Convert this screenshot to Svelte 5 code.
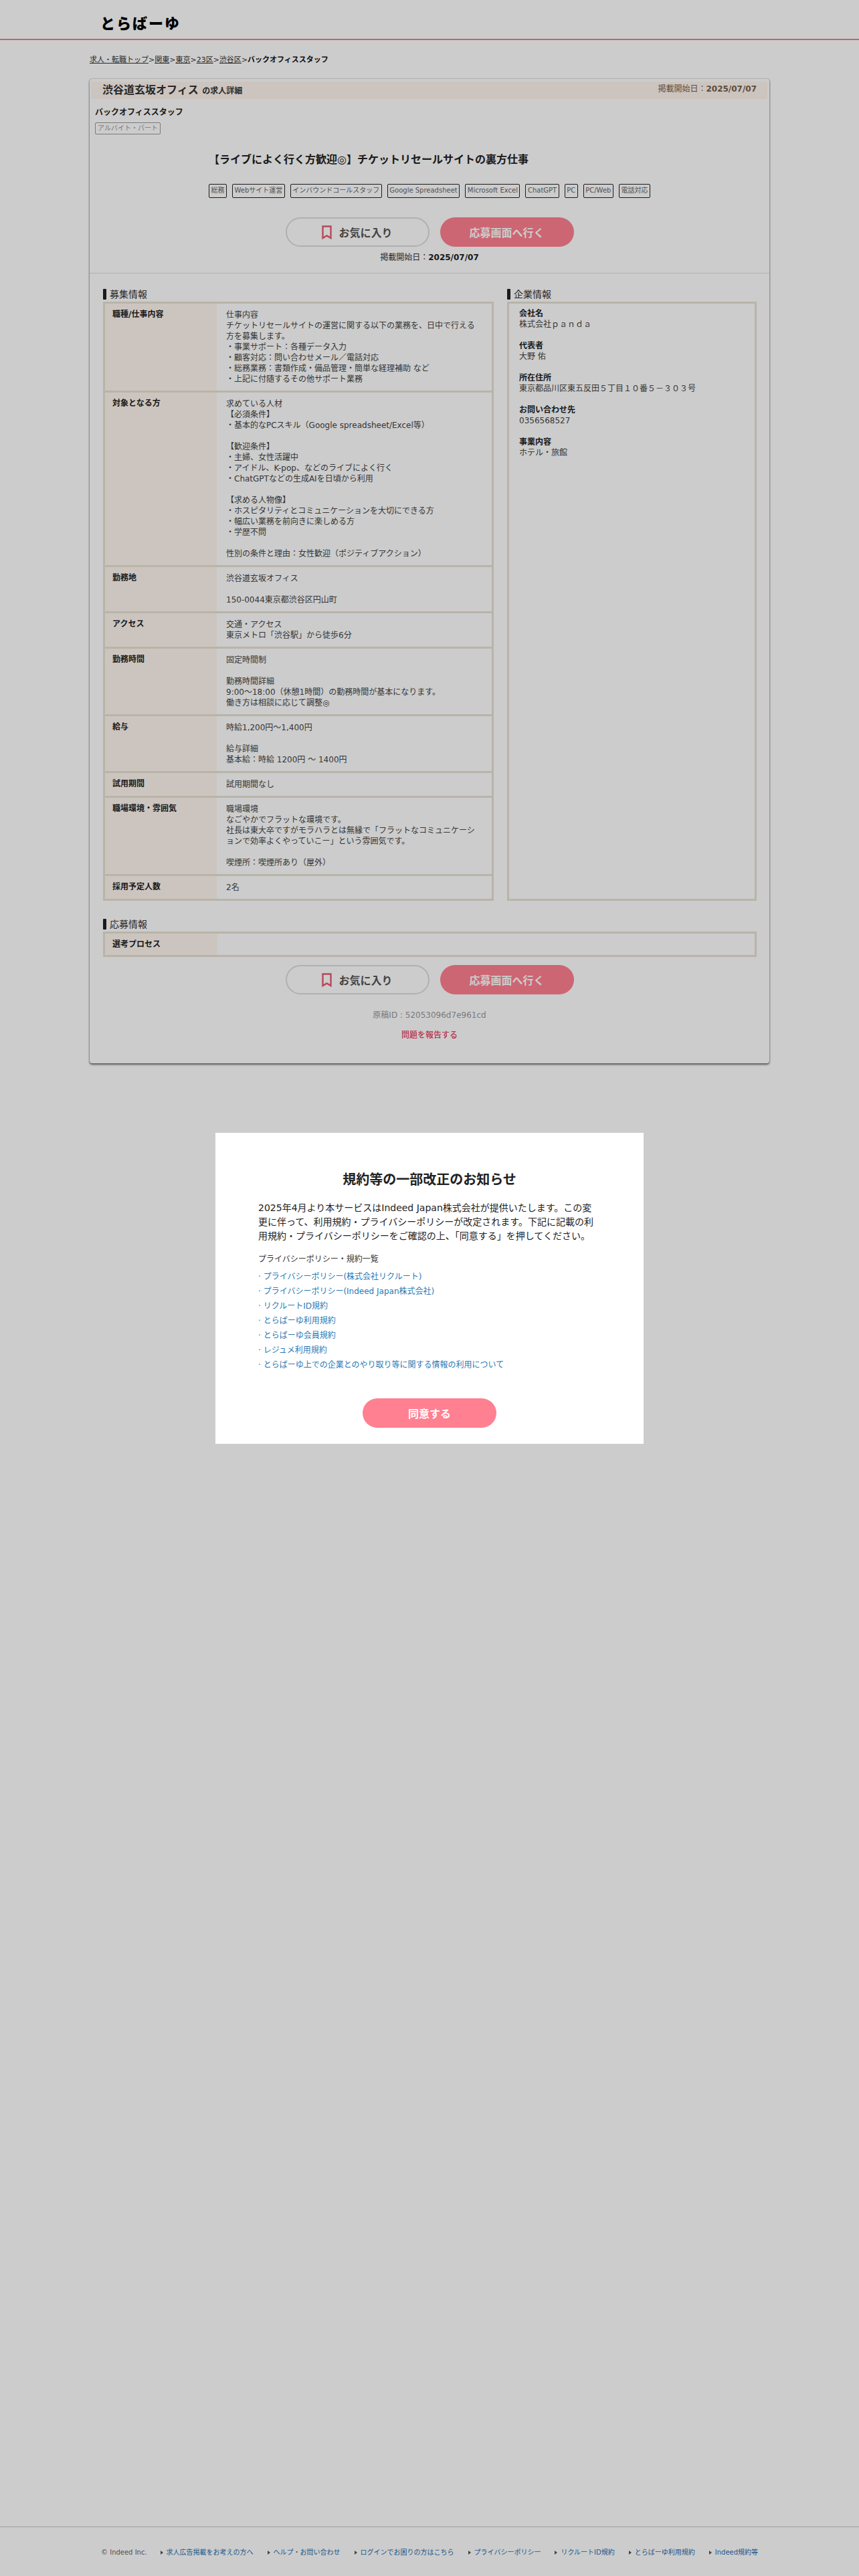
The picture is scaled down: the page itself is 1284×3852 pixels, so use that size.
<script>
  const crumbs = ['求人・転職トップ', '関東', '東京', '23区', '渋谷区'];
  const tags = ['総務', 'Webサイト運営', 'インバウンドコールスタッフ', 'Google Spreadsheet', 'Microsoft Excel', 'ChatGPT', 'PC', 'PC/Web', '電話対応'];
  const rows = [
    ['職種/仕事内容', `仕事内容
チケットリセールサイトの運営に関する以下の業務を、日中で行える方を募集します。
・事業サポート：各種データ入力
・顧客対応：問い合わせメール／電話対応
・総務業務：書類作成・備品管理・簡単な経理補助 など
・上記に付随するその他サポート業務`],
    ['対象となる方', `求めている人材
【必須条件】
・基本的なPCスキル（Google spreadsheet/Excel等）

【歓迎条件】
・主婦、女性活躍中
・アイドル、K-pop、などのライブによく行く
・ChatGPTなどの生成AIを日頃から利用

【求める人物像】
・ホスピタリティとコミュニケーションを大切にできる方
・幅広い業務を前向きに楽しめる方
・学歴不問

性別の条件と理由：女性歓迎（ポジティブアクション）`],
    ['勤務地', `渋谷道玄坂オフィス

150-0044東京都渋谷区円山町`],
    ['アクセス', `交通・アクセス
東京メトロ「渋谷駅」から徒歩6分`],
    ['勤務時間', `固定時間制

勤務時間詳細
9:00〜18:00（休憩1時間）の勤務時間が基本になります。
働き方は相談に応じて調整◎`],
    ['給与', `時給1,200円〜1,400円

給与詳細
基本給：時給 1200円 〜 1400円`],
    ['試用期間', '試用期間なし'],
    ['職場環境・雰囲気', `職場環境
なごやかでフラットな環境です。
社長は東大卒ですがモラハラとは無縁で「フラットなコミュニケーションで効率よくやっていこー」という雰囲気です。

喫煙所：喫煙所あり（屋外）`],
    ['採用予定人数', '2名'],
  ];
  const company = [
    ['会社名', '株式会社ｐａｎｄａ'],
    ['代表者', '大野 佑'],
    ['所在住所', '東京都品川区東五反田５丁目１０番５－３０３号'],
    ['お問い合わせ先', '0356568527'],
    ['事業内容', 'ホテル・旅館'],
  ];
  const policies = [
    'プライバシーポリシー(株式会社リクルート)',
    'プライバシーポリシー(Indeed Japan株式会社)',
    'リクルートID規約',
    'とらばーゆ利用規約',
    'とらばーゆ会員規約',
    'レジュメ利用規約',
    'とらばーゆ上での企業とのやり取り等に関する情報の利用について',
  ];
  const foot = ['求人広告掲載をお考えの方へ', 'ヘルプ・お問い合わせ', 'ログインでお困りの方はこちら', 'プライバシーポリシー', 'リクルートID規約', 'とらばーゆ利用規約', 'Indeed規約等'];
</script>

{#snippet actions()}
  <div class="actions">
    <button class="fav">
      <svg width="15" height="21" viewBox="0 0 15 21" aria-hidden="true"><path d="M1.5 1.5h12v17.5l-6-3.6-6 3.6z" fill="none" stroke="#e85a70" stroke-width="2.4"/></svg>
      お気に入り
    </button>
    <button class="apply">応募画面へ行く</button>
  </div>
{/snippet}

<div class="page">
  <header class="top"><span class="logo">とらばーゆ</span></header>

  <main class="main">
    <nav class="crumbs">
      {#each crumbs as c}<a href="#top">{c}</a><span>&gt;</span>{/each}<b>バックオフィススタッフ</b>
    </nav>

    <article class="card">
      <div class="band">
        <h1>渋谷道玄坂オフィス <small>の求人詳細</small></h1>
        <p>掲載開始日：<b>2025/07/07</b></p>
      </div>

      <div class="intro">
        <h2>バックオフィススタッフ</h2>
        <span class="emp">アルバイト・パート</span>
      </div>

      <div class="lead">
        <h3>【ライブによく行く方歓迎◎】チケットリセールサイトの裏方仕事</h3>
        <ul class="tags">
          {#each tags as t}<li>{t}</li>{/each}
        </ul>
      </div>

      {@render actions()}
      <p class="posted">掲載開始日：<b>2025/07/07</b></p>
      <hr />

      <div class="cols">
        <section class="left">
          <h4>募集情報</h4>
          <div class="table">
            {#each rows as r}
              <div class="row">
                <div class="th">{r[0]}</div>
                <div class="td">{r[1]}</div>
              </div>
            {/each}
          </div>
        </section>
        <section class="right">
          <h4>企業情報</h4>
          <div class="cobox">
            {#each company as c}
              <dl><dt>{c[0]}</dt><dd>{c[1]}</dd></dl>
            {/each}
          </div>
        </section>
      </div>

      <section class="apply-sec">
        <h4>応募情報</h4>
        <div class="table">
          <div class="row"><div class="th">選考プロセス</div><div class="td"></div></div>
        </div>
      </section>

      {@render actions()}
      <p class="rid">原稿ID : 52053096d7e961cd</p>
      <a class="report" href="#top">問題を報告する</a>
    </article>
  </main>

  <footer class="foot">
    <span class="copy">© Indeed Inc.</span>
    {#each foot as f}<a href="#top">{f}</a>{/each}
  </footer>

  <div class="overlay">
    <div class="modal">
      <h5>規約等の一部改正のお知らせ</h5>
      <p class="msg">2025年4月より本サービスはIndeed Japan株式会社が提供いたします。この変更に伴って、利用規約・プライバシーポリシーが改定されます。下記に記載の利用規約・プライバシーポリシーをご確認の上、「同意する」を押してください。</p>
      <p class="lst">プライバシーポリシー・規約一覧</p>
      <ul class="pol">
        {#each policies as p}<li><a href="#top">{p}</a></li>{/each}
      </ul>
      <button class="agree">同意する</button>
    </div>
  </div>
</div>

<style>
  :global(body) { margin: 0; background: #fff; }
  .page {
    position: relative;
    min-height: 3852px;
    display: flex;
    flex-direction: column;
    font-family: "DejaVu Sans", "Noto Sans CJK JP", sans-serif;
    font-size: 12px;
    line-height: 16px;
    color: #333;
  }
  h1, h2, h3, h4, h5, p, ul, dl, dd { margin: 0; padding: 0; }
  ul { list-style: none; }
  a { color: inherit; }
  button { font-family: inherit; border: 0; padding: 0; cursor: pointer; }

  .top {
    height: 58px;
    border-bottom: 2px solid #ee7f8e;
    padding-left: 150px;
    display: flex;
    align-items: center;
    box-sizing: content-box;
  }
  .logo {
    font-family: "Noto Sans CJK JP", sans-serif;
    font-weight: 900;
    font-size: 22px;
    line-height: 24px;
    letter-spacing: 2px;
    color: #000;
    margin-top: 8px;
  }

  .main { flex: 1; padding: 0 134px; }
  .crumbs {
    margin-top: 22px;
    font-size: 11px;
    line-height: 16px;
    color: #333;
    white-space: nowrap;
  }
  .crumbs b { color: #111; }
  .crumbs span { color: #333; }

  .card {
    margin-top: 20px;
    padding: 4px 0 34px;
    background: #fff;
    border-radius: 4px;
    box-shadow: 0 2px 3px rgba(0, 0, 0, .55), 0 0 2px rgba(0, 0, 0, .4);
    text-align: left;
  }
  .band {
    height: 26px;
    margin: 0 3px 0 2px;
    padding: 0 16px 0 17px;
    background: #fff6ee;
    display: flex;
    align-items: center;
    justify-content: space-between;
  }
  .band h1 { font-size: 16px; line-height: 22px; font-weight: 700; color: #333; }
  .band small { font-size: 12px; }
  .band p { color: #75604d; margin-top: -5px; }

  .intro { padding: 12px 8px 0; }
  .intro h2 { font-size: 12px; line-height: 16px; font-weight: 700; color: #222; }
  .emp {
    display: inline-block;
    margin-top: 7px;
    height: 18px;
    box-sizing: border-box;
    padding: 0 3px;
    border: 1px solid #999;
    border-radius: 2px;
    font-size: 10px;
    line-height: 15px;
    color: #999;
  }

  .lead { padding-left: 178px; margin-top: 26px; }
  .lead h3 { font-size: 16px; line-height: 24px; font-weight: 700; color: #222; }
  .tags { display: flex; gap: 8px; margin-top: 24px; }
  .tags li {
    height: 21px;
    box-sizing: border-box;
    padding: 0 2.5px;
    border: 1px solid #222;
    border-radius: 2px;
    font-size: 10px;
    line-height: 18px;
    color: #666;
    white-space: nowrap;
  }

  .actions { display: flex; justify-content: center; gap: 16px; margin-top: 29px; }
  .fav, .apply {
    height: 44px;
    border-radius: 22px;
    font-size: 16px;
    font-weight: 700;
    display: flex;
    align-items: center;
    justify-content: center;
  }
  .fav {
    width: 215px;
    gap: 10px;
    background: #fff;
    border: 2px solid #ddd;
    box-sizing: border-box;
    color: #555;
  }
  .apply { width: 200px; background: #ff8090; color: #fff; }

  .posted { margin-top: 8px; text-align: center; color: #333; }
  .posted b { color: #222; }
  hr { margin: 15px 0 0; border: 0; border-top: 1px solid #ddd; }

  h4 {
    position: relative;
    font-size: 14px;
    line-height: 20px;
    font-weight: 400;
    padding-left: 10px;
    color: #333;
  }
  h4::before {
    content: "";
    position: absolute;
    left: 0;
    top: 2px;
    width: 5px;
    height: 16px;
    border-radius: 1px;
    background: #222;
  }

  .cols { display: flex; gap: 20px; margin-top: 21px; padding: 0 19px 0 20px; }
  .left { width: 584px; flex: none; }
  .right { flex: 1; display: flex; flex-direction: column; }

  .table { border: 3px solid #e6e2d2; margin-top: 1px; }
  .row { display: flex; border-bottom: 3px solid #e6e2d2; }
  .row:last-child { border-bottom: 0; }
  .th {
    width: 167px;
    flex: none;
    box-sizing: border-box;
    padding: 9px 11px;
    background: #fff7ef;
    font-weight: 700;
    color: #222;
    line-height: 15px;
  }
  .td {
    flex: 1;
    min-height: 16px;
    padding: 9px 14px;
    white-space: pre-line;
    color: #444;
  }

  .cobox {
    flex: 1;
    border: 3px solid #e6e2d2;
    margin-top: 1px;
    padding: 7px 15px;
  }
  .cobox dl { margin-bottom: 16px; }
  .cobox dt { font-weight: 700; color: #222; }
  .cobox dd { color: #444; }

  .apply-sec { margin-top: 25px; padding: 0 19px 0 20px; }
  .apply-sec .th { width: 168px; padding: 8px 11px; line-height: 16px; }
  .apply-sec .td { padding: 8px 14px; }
  .apply-sec + .actions { margin-top: 12px; }

  .rid { margin-top: 23px; text-align: center; color: #999; }
  .report {
    display: block;
    margin-top: 14px;
    text-align: center;
    text-decoration: none;
    font-weight: 500;
    color: #e8405c;
  }

  .foot {
    height: 71px;
    border-top: 1px solid #c8c8c8;
    padding-left: 151px;
    display: flex;
    align-items: center;
    font-size: 10px;
    white-space: nowrap;
    padding-top: 2px;
    box-sizing: content-box;
  }
  .copy { color: #666; margin-right: 20px; }
  .foot a {
    position: relative;
    padding-left: 9px;
    margin-right: 21px;
    color: #2a6fb0;
    text-decoration: none;
  }
  .foot a::before {
    content: "";
    position: absolute;
    left: 0;
    top: 5px;
    border-left: 4px solid #555;
    border-top: 3px solid transparent;
    border-bottom: 3px solid transparent;
  }

  .overlay {
    position: absolute;
    inset: 0;
    background: rgba(0, 0, 0, .2);
    display: flex;
    justify-content: center;
    align-items: flex-start;
    padding-top: 1694px;
    box-sizing: border-box;
  }
  .modal {
    width: 640px;
    height: 465px;
    box-sizing: border-box;
    padding: 57px 64px 0;
    background: #fff;
    color: #222;
  }
  h5 {
    font-size: 20px;
    line-height: 26px;
    font-weight: 700;
    text-align: center;
    color: #222;
  }
  .msg { margin-top: 19px; font-size: 14px; line-height: 21px; }
  .lst { margin-top: 16px; color: #333; }
  .pol { margin-top: 7px; }
  .pol li { line-height: 22px; height: 22px; color: #2a7ab5; white-space: nowrap; }
  .pol li::before { content: "· "; }
  .pol a { text-decoration: none; }
  .agree {
    display: block;
    margin: 39px auto 0;
    width: 200px;
    height: 44px;
    border-radius: 22px;
    background: #ff8090;
    color: #fff;
    font-size: 16px;
    font-weight: 700;
  }
</style>
